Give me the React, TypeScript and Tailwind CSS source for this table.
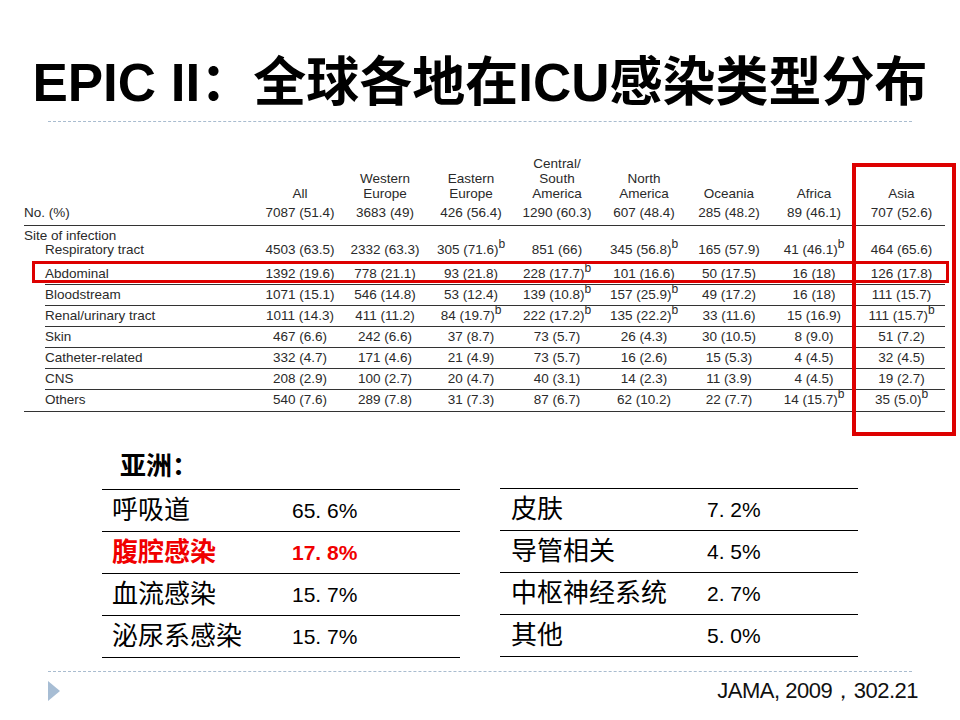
const headers: string[][] = [
  ["All"],
  ["Western", "Europe"],
  ["Eastern", "Europe"],
  ["Central/", "South", "America"],
  ["North", "America"],
  ["Oceania"],
  ["Africa"],
  ["Asia"],
];

const totals = ["7087 (51.4)", "3683 (49)", "426 (56.4)", "1290 (60.3)", "607 (48.4)", "285 (48.2)", "89 (46.1)", "707 (52.6)"];

// "^" at the end of a value marks the superscript b
const sites: { label: string; values: string[] }[] = [
  { label: "Abdominal", values: ["1392 (19.6)", "778 (21.1)", "93 (21.8)", "228 (17.7)^", "101 (16.6)", "50 (17.5)", "16 (18)", "126 (17.8)"] },
  { label: "Bloodstream", values: ["1071 (15.1)", "546 (14.8)", "53 (12.4)", "139 (10.8)^", "157 (25.9)^", "49 (17.2)", "16 (18)", "111 (15.7)"] },
  { label: "Renal/urinary tract", values: ["1011 (14.3)", "411 (11.2)", "84 (19.7)^", "222 (17.2)^", "135 (22.2)^", "33 (11.6)", "15 (16.9)", "111 (15.7)^"] },
  { label: "Skin", values: ["467 (6.6)", "242 (6.6)", "37 (8.7)", "73 (5.7)", "26 (4.3)", "30 (10.5)", "8 (9.0)", "51 (7.2)"] },
  { label: "Catheter-related", values: ["332 (4.7)", "171 (4.6)", "21 (4.9)", "73 (5.7)", "16 (2.6)", "15 (5.3)", "4 (4.5)", "32 (4.5)"] },
  { label: "CNS", values: ["208 (2.9)", "100 (2.7)", "20 (4.7)", "40 (3.1)", "14 (2.3)", "11 (3.9)", "4 (4.5)", "19 (2.7)"] },
  { label: "Others", values: ["540 (7.6)", "289 (7.8)", "31 (7.3)", "87 (6.7)", "62 (10.2)", "22 (7.7)", "14 (15.7)^", "35 (5.0)^"] },
];

const respiratory = ["4503 (63.5)", "2332 (63.3)", "305 (71.6)^", "851 (66)", "345 (56.8)^", "165 (57.9)", "41 (46.1)^", "464 (65.6)"];

const asiaLeft = [
  { name: "呼吸道", pct: "65. 6%" },
  { name: "腹腔感染", pct: "17. 8%", red: true },
  { name: "血流感染", pct: "15. 7%" },
  { name: "泌尿系感染", pct: "15. 7%" },
];

const asiaRight = [
  { name: "皮肤", pct: "7. 2%" },
  { name: "导管相关", pct: "4. 5%" },
  { name: "中枢神经系统", pct: "2. 7%" },
  { name: "其他", pct: "5. 0%" },
];

function Value({ text }: { text: string }) {
  const sup = text.endsWith("^");
  return (
    <div className="text-center whitespace-nowrap">
      {sup ? text.slice(0, -1) : text}
      {sup && <sup className="text-[12px]">b</sup>}
    </div>
  );
}

export default function App() {
  return (
    <div className="w-[960px] h-[720px] bg-white relative overflow-hidden font-['Liberation_Sans','Noto_Sans_CJK_SC',sans-serif] text-black">
      <h1 className="mt-[53px] h-[60px] leading-[60px] text-center text-[53px] font-bold whitespace-nowrap">
        EPIC II：全球各地在ICU感染类型分布
      </h1>
      <div className="ml-[48px] mt-[8px] w-[864px] border-t border-dashed border-[#a9bccf]" />

      {/* JAMA table */}
      <div className="ml-[24px] mt-[34px] w-[921px] text-[13.5px] text-[#2a2a2a]">
        <div className="grid grid-cols-[234px_84px_86px_86px_86px_88px_82px_88px_87px] items-end leading-[15px]">
          <div />
          {headers.map((h) => (
            <div key={h.join(" ")} className="text-center">
              {h.map((line) => (
                <div key={line}>{line}</div>
              ))}
            </div>
          ))}
        </div>
        <div className="grid grid-cols-[234px_84px_86px_86px_86px_88px_82px_88px_87px] items-center h-[25px] border-b border-[#333]">
          <div>No. (%)</div>
          {totals.map((v) => (
            <Value key={v} text={v} />
          ))}
        </div>
        <div className="border-b border-[#333]">
          <div className="pt-[3px] leading-[14px]">Site of infection</div>
          <div className="ml-[21px] grid grid-cols-[213px_84px_86px_86px_86px_88px_82px_88px_87px] leading-[14px] pb-[6px] border-b border-[#333]">
            <div>Respiratory tract</div>
            {respiratory.map((v, i) => (
              <Value key={i} text={v} />
            ))}
          </div>
          <div className="ml-[21px]">
            {sites.map((s, idx) => (
              <div
                key={s.label}
                className={`grid grid-cols-[213px_84px_86px_86px_86px_88px_82px_88px_87px] items-center h-[21px] ${
                  idx < sites.length - 1 ? "border-b border-[#333]" : ""
                }`}
              >
                <div>{s.label}</div>
                {s.values.map((v, i) => (
                  <Value key={i} text={v} />
                ))}
              </div>
            ))}
          </div>
        </div>
      </div>

      {/* highlight boxes */}
      <div className="absolute left-[32px] top-[261px] w-[917px] h-[22px] border-[3px] border-[#dd0000]" />
      <div className="absolute left-[852px] top-[163px] w-[104px] h-[273px] border-[4px] border-[#dd0000]" />

      {/* Asia summary */}
      <div className="flex gap-[40px] ml-[102px] mt-[38px]">
        <div className="w-[358px]">
          <div className="pl-[18px] h-[32px] leading-[32px] text-[26px] font-bold">亚洲：</div>
          <div className="mt-[7px] border-t border-black">
            {asiaLeft.map((r) => (
              <div
                key={r.name}
                className={`flex items-center h-[42px] border-b border-black pl-[10px] ${r.red ? "text-[#f00000] font-bold" : ""}`}
              >
                <span className="w-[180px] text-[26px]">{r.name}</span>
                <span className="text-[21px]">{r.pct}</span>
              </div>
            ))}
          </div>
        </div>
        <div className="w-[358px] pt-[38px]">
          <div className="border-t border-black">
            {asiaRight.map((r) => (
              <div key={r.name} className="flex items-center h-[42px] border-b border-black pl-[11px]">
                <span className="w-[196px] text-[26px]">{r.name}</span>
                <span className="text-[21px]">{r.pct}</span>
              </div>
            ))}
          </div>
        </div>
      </div>

      <div className="ml-[48px] mt-[13px] w-[864px] border-t border-dashed border-[#a9bccf]" />
      <div className="flex items-center justify-between ml-[48px] w-[870px] mt-[7px]">
        <svg width="12" height="20" viewBox="0 0 12 20">
          <polygon points="0,0 12,10 0,20" fill="#a7bdd4" />
        </svg>
        <div className="font-['Liberation_Sans_Narrow','Liberation_Sans',sans-serif] text-[22px] leading-[24px] tracking-[-0.5px] text-[#111]">
          JAMA, 2009，302.21
        </div>
      </div>
    </div>
  );
}
